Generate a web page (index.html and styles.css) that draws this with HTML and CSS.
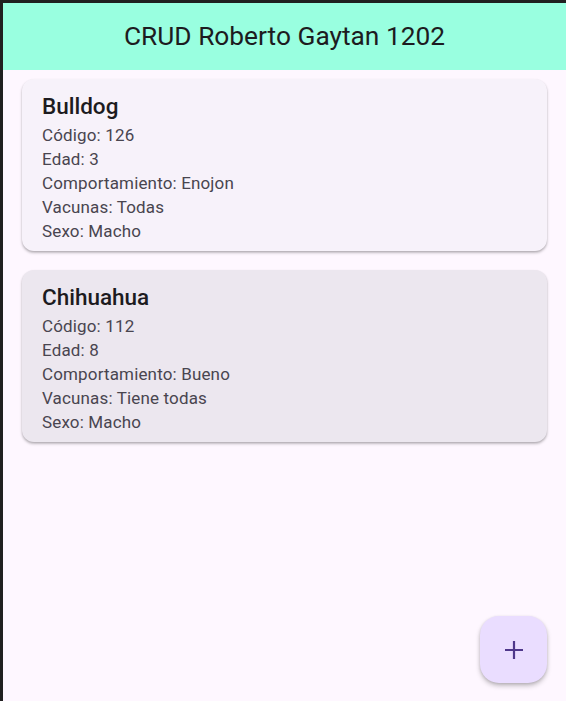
FILE: index.html
```html
<!DOCTYPE html>
<html lang="es">
<head>
<meta charset="utf-8">
<title>CRUD Roberto Gaytan 1202</title>
<link rel="stylesheet" href="styles.css">
</head>
<body>
<div class="app">
  <header class="appbar">
    <h1 class="appbar-title">CRUD Roberto Gaytan 1202</h1>
  </header>
  <main class="list">
    <article class="card">
      <h2 class="card-title">Bulldog</h2>
      <p class="card-line">Código: 126</p>
      <p class="card-line">Edad: 3</p>
      <p class="card-line">Comportamiento: Enojon</p>
      <p class="card-line">Vacunas: Todas</p>
      <p class="card-line">Sexo: Macho</p>
    </article>
    <article class="card card-active">
      <h2 class="card-title">Chihuahua</h2>
      <p class="card-line">Código: 112</p>
      <p class="card-line">Edad: 8</p>
      <p class="card-line">Comportamiento: Bueno</p>
      <p class="card-line">Vacunas: Tiene todas</p>
      <p class="card-line">Sexo: Macho</p>
    </article>
  </main>
  <button class="fab" aria-label="Agregar">
    <svg width="20" height="20" viewBox="0 0 20 20" aria-hidden="true">
      <path d="M10 1v18M1 10h18" stroke="#4f378b" stroke-width="2.2" fill="none"/>
    </svg>
  </button>
</div>
</body>
</html>
```
FILE: styles.css
```css
* { box-sizing: border-box; }
html, body { margin: 0; padding: 0; }
body {
  background: #202020;
  padding: 3px 0 0 3px;
  width: 566px;
  height: 701px;
  overflow: hidden;
  font-family: Roboto, "Noto Sans", sans-serif;
}
.app {
  position: relative;
  width: 563px;
  height: 698px;
  background: #fef7ff;
}
.appbar {
  height: 67px;
  background: #99ffe0;
  display: flex;
  align-items: center;
  justify-content: center;
}
.appbar-title {
  margin: 0 0 1px 0;
  font-size: 26.3px;
  font-weight: 400;
  color: #1d1b20;
  letter-spacing: 0;
}
.list {
  display: flex;
  flex-direction: column;
  gap: 19px;
  padding: 9px 19px 0 19px;
}
.card {
  background: #f7f2fa;
  border-radius: 12px;
  padding: 13px 20px 8px 20px;
  box-shadow: 0 2px 3px rgba(0,0,0,0.22), 0 1px 2px rgba(0,0,0,0.12);
}
.card-active { background: #ece7ef; }
.card-title {
  margin: 0 0 3px 0;
  font-size: 22.5px;
  line-height: 28px;
  font-weight: 500;
  color: #1d1b20;
}
.card-line {
  margin: 0;
  font-size: 17px;
  line-height: 24px;
  color: #49454f;
  letter-spacing: 0.15px;
}
.fab {
  position: absolute;
  right: 19px;
  bottom: 18px;
  width: 67px;
  height: 67px;
  border: none;
  border-radius: 19px;
  background: #eaddff;
  display: flex;
  align-items: center;
  justify-content: center;
  box-shadow: 0 3px 5px rgba(0,0,0,0.22), 0 1px 3px rgba(0,0,0,0.12);
  padding: 0;
}
```
